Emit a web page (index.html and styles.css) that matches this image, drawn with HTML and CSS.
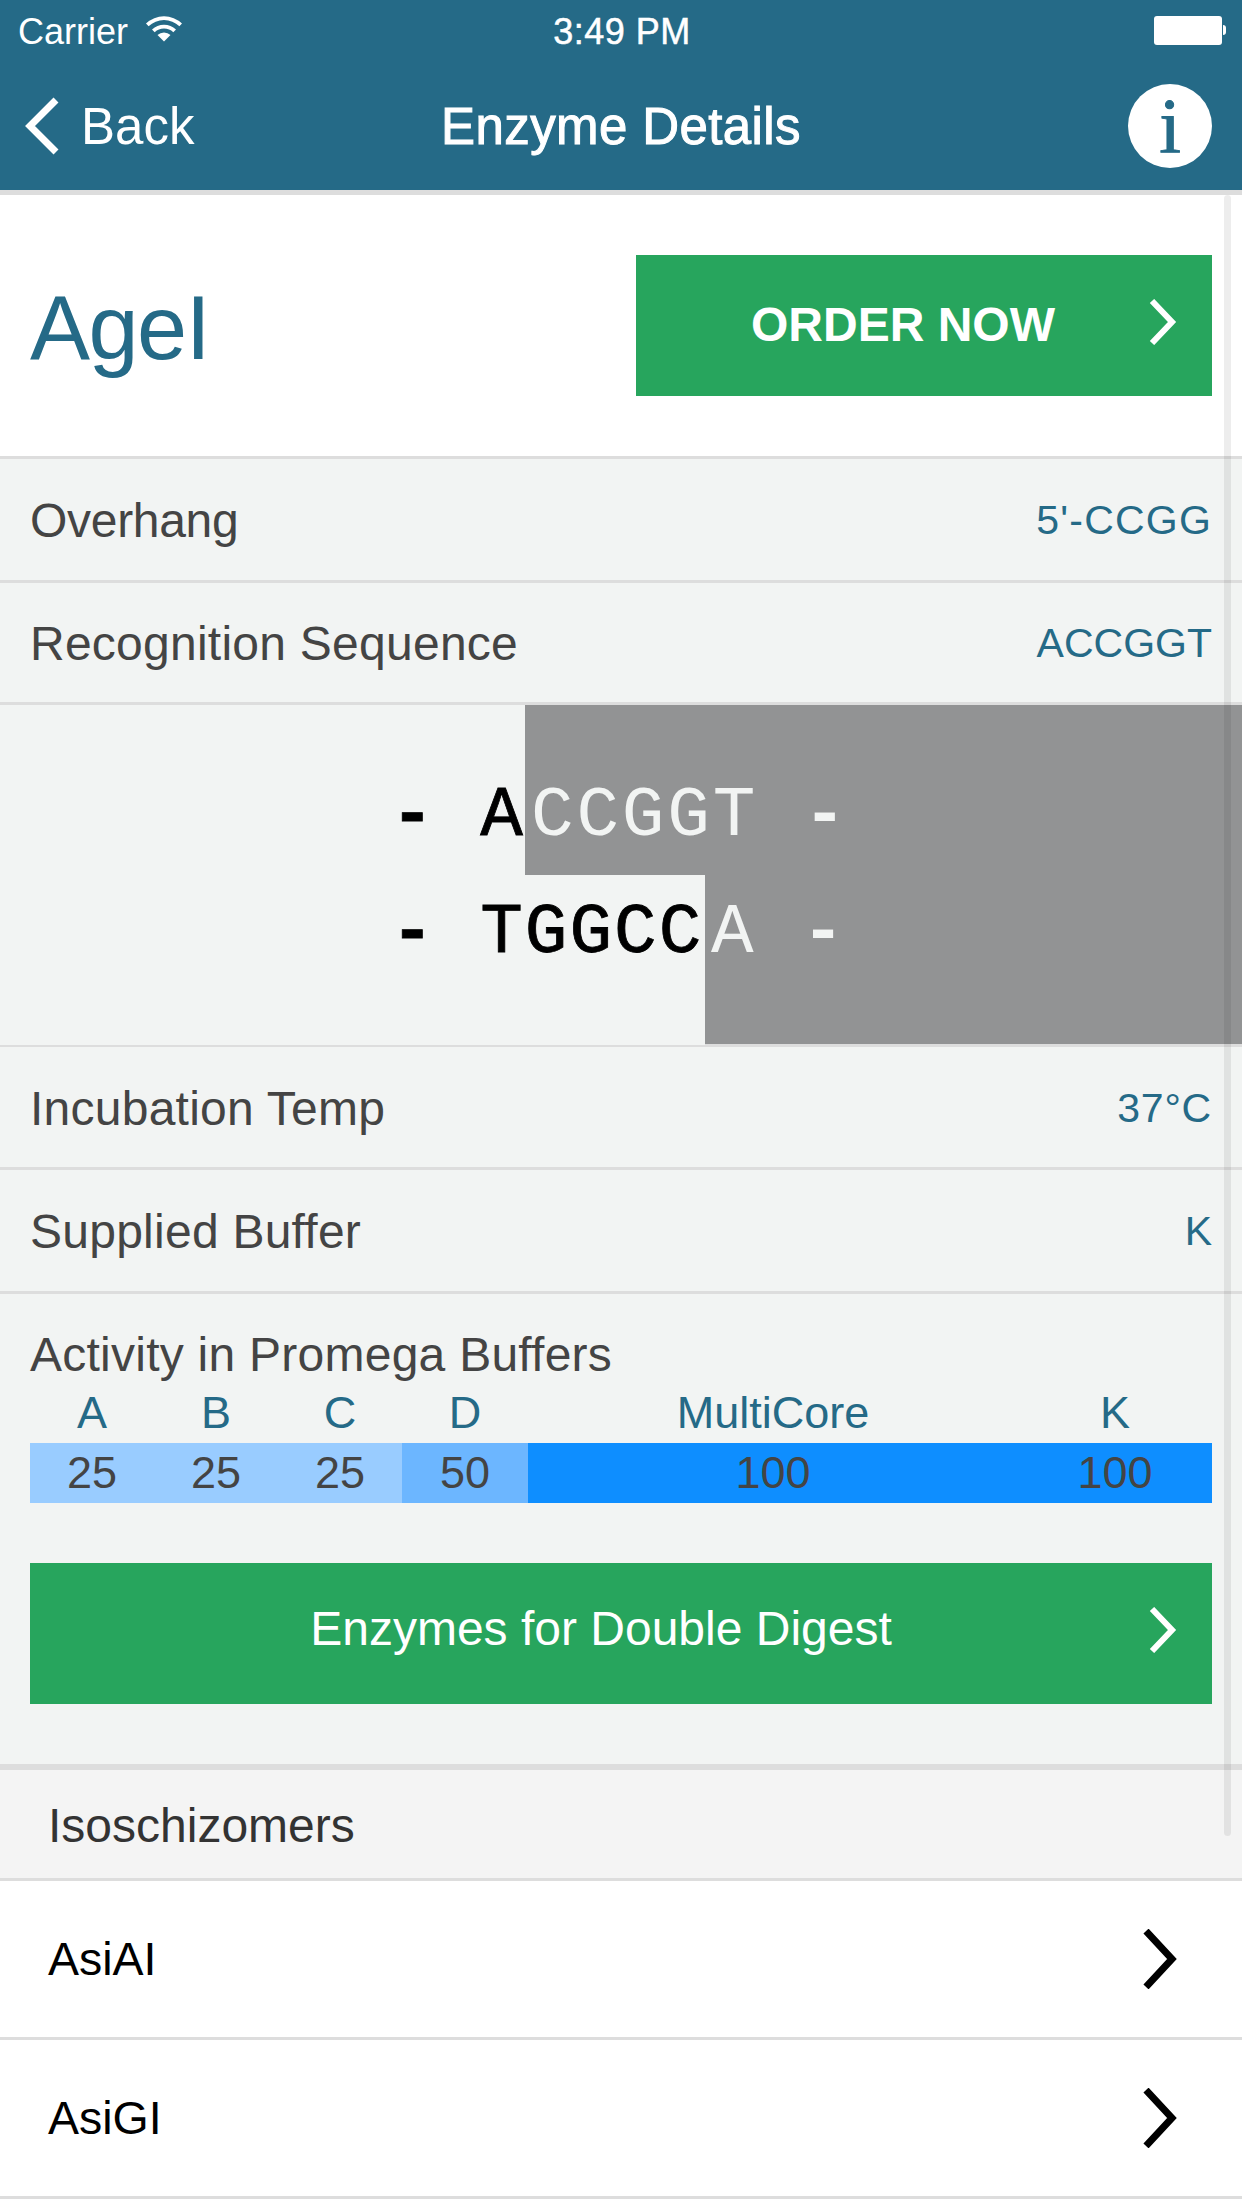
FILE: index.html
```html
<!DOCTYPE html>
<html lang="en">
<head>
    <meta charset="utf-8">
    <title>Enzyme Details</title>
    <link rel="stylesheet" href="styles.css">
</head>
<body>
    <div class="screen">
        <div class="topbar">
            <div class="status">
                <div class="status-left">
                    <span>Carrier</span>
                    <svg class="wifi" viewBox="0 0 38 28"><path d="M1 9.5a26 26 0 0 1 36 0l-2.6 2.8a22 22 0 0 0-30.800 0z" fill="#fff"/><path d="M7 15.500a17.500 17.500 0 0 1 24 0l-2.700 2.800a13.500 13.500 0 0 0-18.600 0z" fill="#fff"/><path d="M12.500 21a9.500 9.500 0 0 1 13 0L19 27.500z" fill="#fff"/></svg>
                </div>
                <span class="clock">3:49 PM</span>
                <div class="battery"><div class="battery-body"></div><div class="battery-nub"></div></div>
            </div>
            <div class="nav">
                <div class="back">
                    <svg class="back-icon" viewBox="0 0 36 58"><path d="M32 3 6 29l26 26" fill="none" stroke="#fff" stroke-width="7"/></svg>
                    <span>Back</span>
                </div>
                <div class="nav-title">Enzyme Details</div>
                <div class="info">i</div>
            </div>
        </div>

        <div class="content">
            <div class="head">
                <h1 class="enzyme-name">AgeI</h1>
                <div class="order-btn">
                    <span>ORDER NOW</span>
                    <svg class="btn-arrow" viewBox="0 0 28 46"><path d="M3 2l20 21L3 44" fill="none" stroke="#fff" stroke-width="6"/></svg>
                </div>
            </div>

            <div class="row row-first"><span class="label">Overhang</span><span class="value">5'-CCGG</span></div>
            <div class="row row-second"><span class="label">Recognition Sequence</span><span class="value">ACCGGT</span></div>

            <div class="seq">
                <div class="seq-line seq-line-top">
                    <div class="seq-left seq-left-top"><b class="dash">-</b> A</div>
                    <div class="seq-right">CCGGT <b class="dash">-</b></div>
                </div>
                <div class="seq-line seq-line-bottom">
                    <div class="seq-left seq-left-bottom"><b class="dash">-</b> TGGCC</div>
                    <div class="seq-right">A <b class="dash">-</b></div>
                </div>
            </div>

            <div class="row row-temp"><span class="label">Incubation Temp</span><span class="value">37°C</span></div>
            <div class="row row-buffer"><span class="label">Supplied Buffer</span><span class="value">K</span></div>

            <div class="activity">
                <div class="activity-title">Activity in Promega Buffers</div>
                <div class="activity-grid">
                    <div class="buf-name">A</div>
                    <div class="buf-name">B</div>
                    <div class="buf-name">C</div>
                    <div class="buf-name">D</div>
                    <div class="buf-name">MultiCore</div>
                    <div class="buf-name">K</div>
                    <div class="buf-val level25">25</div>
                    <div class="buf-val level25">25</div>
                    <div class="buf-val level25">25</div>
                    <div class="buf-val level50">50</div>
                    <div class="buf-val level100">100</div>
                    <div class="buf-val level100">100</div>
                </div>
                <div class="digest-btn">
                    <span>Enzymes for Double Digest</span>
                    <svg class="btn-arrow" viewBox="0 0 28 46"><path d="M3 2l20 21L3 44" fill="none" stroke="#fff" stroke-width="6"/></svg>
                </div>
            </div>

            <div class="section-head">Isoschizomers</div>
            <div class="list-item">
                <span>AsiAI</span>
                <svg class="list-arrow" viewBox="0 0 36 60"><path d="M4 2l26 28L4 58" fill="none" stroke="#000" stroke-width="7"/></svg>
            </div>
            <div class="list-item">
                <span>AsiGI</span>
                <svg class="list-arrow" viewBox="0 0 36 60"><path d="M4 2l26 28L4 58" fill="none" stroke="#000" stroke-width="7"/></svg>
            </div>

            <div class="scrollbar"></div>
        </div>
    </div>
</body>
</html>
```

FILE: styles.css
```css
* {
    box-sizing: border-box;
}

body {
    margin: 0;
    font-family: "Liberation Sans", Arial, sans-serif;
    color: #444;
}

.screen {
    width: 1242px;
    height: 2208px;
    overflow: hidden;
    background-color: #fff;
}

/* top bar */
.topbar {
    height: 195px;
    background-color: #256a87;
    border-bottom: 5px solid #ddd;
    color: #fff;
}

.status {
    height: 62px;
    padding: 2px 16px 0 18px;
    display: grid;
    grid-template-columns: 1fr auto 1fr;
    align-items: center;
    font-size: 36px;
}

.status-left {
    display: flex;
    align-items: center;
    gap: 17px;
}

.wifi {
    width: 38px;
    height: 28px;
    margin-top: -8px;
}

.clock {
    letter-spacing: 0.5px;
    -webkit-text-stroke: 0.5px #fff;
}

.battery {
    display: flex;
    align-items: center;
    justify-self: end;
}

.battery-body {
    width: 68px;
    height: 29px;
    background-color: #fff;
    border-radius: 3px;
    margin-top: -4px;
}

.battery-nub {
    width: 3px;
    height: 10px;
    background-color: #fff;
    border-radius: 0 3px 3px 0;
    margin-left: 1px;
    margin-top: -4px;
}

.nav {
    height: 128px;
    padding: 0 27px;
    display: grid;
    grid-template-columns: 1fr auto 1fr;
    align-items: center;
}

.back {
    display: flex;
    align-items: center;
    gap: 21px;
    margin-left: -3px;
    font-size: 51px;
}

.back-icon {
    width: 36px;
    height: 58px;
}

.nav-title {
    font-size: 51px;
    letter-spacing: 0.4px;
    -webkit-text-stroke: 1px #fff;
}

.info {
    justify-self: end;
    width: 84px;
    height: 84px;
    margin-right: 3px;
    border-radius: 50%;
    background-color: #fff;
    color: #256a87;
    font: 78px/84px "Liberation Serif", serif;
    text-align: center;
    -webkit-text-stroke: 1px #256a87;
}

/* scrolling part */
.content {
    position: relative;
    height: 2013px;
    overflow: hidden;
}

.scrollbar {
    position: absolute;
    top: 0;
    right: 11px;
    width: 7px;
    height: 1641px;
    border-radius: 4px;
    background-color: rgba(0, 0, 0, 0.07);
}

.head {
    height: 264px;
    padding: 0 30px;
    display: flex;
    justify-content: space-between;
    align-items: center;
    background-color: #fff;
    border-bottom: 3px solid #ddd;
}

.enzyme-name {
    margin: 0;
    padding-top: 5px;
    font-size: 90px;
    font-weight: normal;
    letter-spacing: -1.5px;
    color: #256a87;
}

.order-btn {
    position: relative;
    width: 576px;
    height: 141px;
    padding: 0 42px 2px 0;
    display: flex;
    align-items: center;
    justify-content: center;
    background-color: #27a55d;
    color: #fff;
    font-size: 48px;
    font-weight: bold;
    white-space: nowrap;
}

.btn-arrow {
    position: absolute;
    right: 35px;
    top: 44px;
    width: 28px;
    height: 46px;
}

.row {
    padding: 2px 30px 0;
    display: flex;
    justify-content: space-between;
    align-items: center;
    background-color: #f2f4f3;
    border-bottom: 3px solid #ddd;
}

.row-first {
    height: 124px;
}

.row-second {
    height: 122px;
}

.row-temp {
    height: 123px;
}

.row-buffer {
    height: 124px;
}

.label {
    font-size: 48px;
    letter-spacing: 0.25px;
}

.row-first .label {
    letter-spacing: -0.3px;
}

.value {
    font-size: 41px;
    color: #256a87;
}

.row-first .value {
    letter-spacing: 1.2px;
}

.row-temp .value {
    letter-spacing: 0.8px;
}

/* sequence */
.seq {
    height: 342px;
    background-color: #929394;
    border-bottom: 3px solid #ddd;
    font: 71px "Liberation Mono", monospace;
    color: #f2f4f3;
}

.seq-line {
    height: 170px;
    display: flex;
}

.seq-left {
    height: 100%;
    padding-left: 391px;
    display: flex;
    align-items: center;
    flex-shrink: 0;
    background-color: #f2f4f3;
    color: #000;
    letter-spacing: 2px;
    white-space: pre;
    -webkit-text-stroke: 0.8px #000;
}

.seq-left-top {
    width: 525px;
    padding-top: 52px;
}

.seq-left-bottom {
    width: 705px;
    padding-bottom: 54px;
}

.seq-right {
    display: flex;
    align-items: center;
    padding-left: 6px;
    letter-spacing: 2.8px;
    white-space: pre;
}

.seq-line-top .seq-right {
    padding-top: 52px;
}

.seq-line-bottom .seq-right {
    padding-bottom: 54px;
}

.dash {
    font-weight: bold;
}

/* activity */
.activity {
    height: 476px;
    padding: 0 30px;
    background-color: #f2f4f3;
    border-bottom: 6px solid #ddd;
}

.activity-title {
    height: 103px;
    padding-top: 33px;
    font-size: 48px;
    line-height: 56px;
    letter-spacing: 0.25px;
}

.activity-grid {
    display: grid;
    grid-template-columns: 124px 124px 124px 126px 490px 194px;
    grid-template-rows: 46px 60px;
    text-align: center;
    font-size: 45px;
}

.buf-name {
    color: #256a87;
    line-height: 32px;
}

.buf-val {
    line-height: 60px;
}

.level25 {
    background-color: #99ccff;
}

.level50 {
    background-color: #6cb6ff;
}

.level100 {
    background-color: #0e8eff;
}

.digest-btn {
    position: relative;
    height: 141px;
    margin-top: 60px;
    padding: 0 40px 10px 0;
    display: flex;
    align-items: center;
    justify-content: center;
    background-color: #27a55d;
    color: #fff;
    font-size: 48px;
}

/* list */
.section-head {
    height: 111px;
    padding: 2px 48px 0;
    display: flex;
    align-items: center;
    background-color: #f4f4f4;
    border-bottom: 3px solid #ddd;
    font-size: 48px;
    color: #333;
}

.list-item {
    height: 159px;
    padding: 0 64px 0 48px;
    display: flex;
    justify-content: space-between;
    align-items: center;
    border-bottom: 3px solid #ddd;
    font-size: 46.500px;
    color: #000;
}

.list-arrow {
    width: 36px;
    height: 60px;
}
```
